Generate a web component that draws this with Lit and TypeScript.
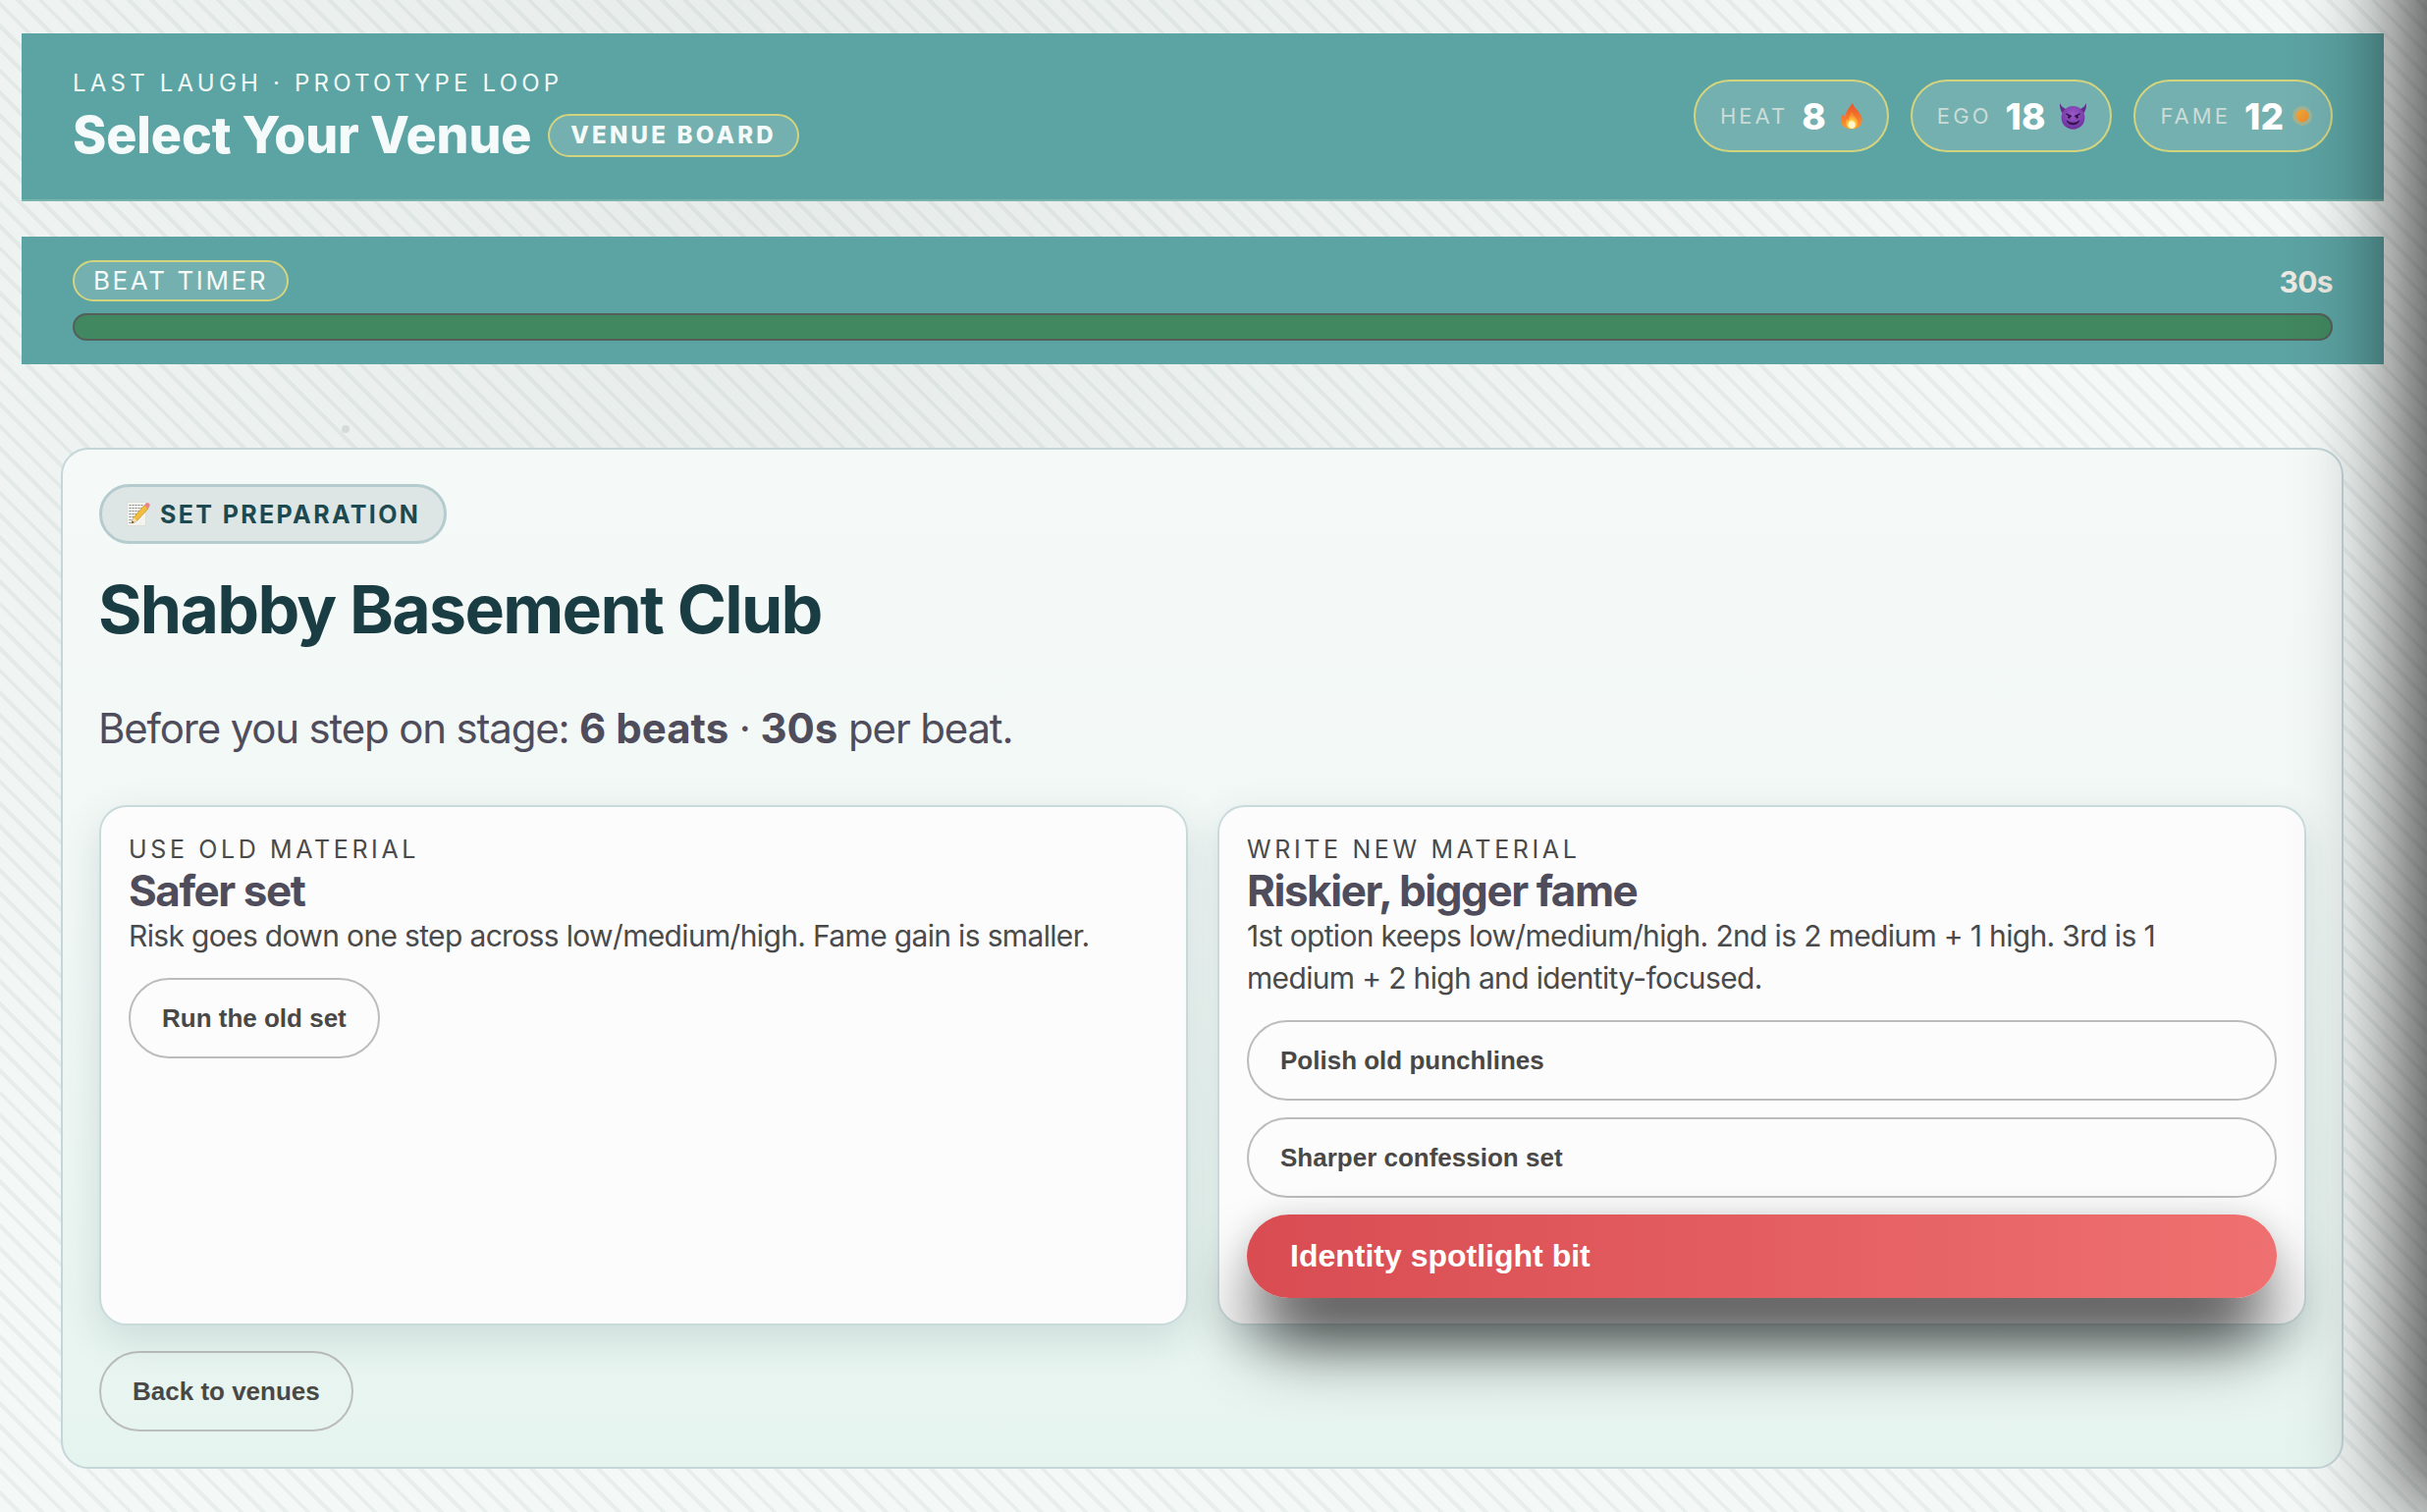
// app.ts
import { LitElement, css, html, svg } from "lit";
import { customElement, property } from "lit/decorators.js";

const fireIcon = svg`
  <svg class="emoji fire" viewBox="0 0 24 28" width="24" height="28">
    <defs>
      <linearGradient id="fire-a" x1="0" y1="0" x2="0" y2="1">
        <stop offset="0" stop-color="#e8512b" />
        <stop offset="0.55" stop-color="#f4772c" />
        <stop offset="1" stop-color="#fb9a30" />
      </linearGradient>
      <radialGradient id="fire-b" cx="0.5" cy="0.8" r="0.6">
        <stop offset="0" stop-color="#fff6b8" />
        <stop offset="0.45" stop-color="#ffd54a" />
        <stop offset="1" stop-color="#f98a2a" />
      </radialGradient>
    </defs>
    <path fill="url(#fire-a)" d="M13 1c1 4 4 6 6.500 9.500 2.500 3.500 3.500 6 3 9.500-.7 4.500-5 7.500-10.500 7.500S1.700 24.500 1 20c-.5-3.300.8-6 2.700-8.300.2 1.600.8 2.800 1.900 3.500C5.300 9.800 9.500 6 13 1z" />
    <path fill="url(#fire-b)" d="M12.500 10c.6 2.500 2.500 4 4.200 6.300 1.300 1.800 2 3.500 1.600 5.400-.6 3-3.300 5.300-6.300 5.300s-5.800-2.200-6.300-5c-.4-2.200.6-4 2-5.400.2 1 .7 1.700 1.300 2.100-.2-3.300 1.300-6 3.500-8.700z" />
    <ellipse cx="12" cy="23" rx="3.500" ry="3.800" fill="#fff7c9" />
  </svg>
`;

const devilIcon = svg`
  <svg class="emoji" viewBox="0 0 30 28" width="29" height="27">
    <defs>
      <radialGradient id="devil-a" cx="0.5" cy="0.35" r="0.7">
        <stop offset="0" stop-color="#9a5ac8" />
        <stop offset="1" stop-color="#6a2f9c" />
      </radialGradient>
    </defs>
    <path fill="#5f2b8e" d="M1 0c1.500 3.500 3.800 5.500 7 6.500L4.500 12C2 8.500.7 4.500 1 0zM29 0c-1.500 3.500-3.800 5.500-7 6.500l3.500 5.500C28 8.500 29.300 4.500 29 0z" />
    <circle cx="15" cy="15.500" r="12.300" fill="url(#devil-a)" />
    <path d="M8 11.500l5 2.300M22 11.500l-5 2.300" stroke="#2f1248" stroke-width="1.300" stroke-linecap="round" />
    <ellipse cx="10.800" cy="14.800" rx="1.300" ry="1.500" fill="#2f1248" />
    <ellipse cx="19.200" cy="14.800" rx="1.300" ry="1.500" fill="#2f1248" />
    <path d="M8.500 18.500c2 3.500 11 3.500 13 0-1.500 5.500-11.500 5.500-13 0z" fill="#2f1248" stroke="#2f1248" stroke-linejoin="round" />
  </svg>
`;

const fameIcon = svg`
  <svg class="emoji fame" viewBox="0 0 20 20" width="20" height="20">
    <defs>
      <linearGradient id="fame-a" x1="0" y1="0" x2="1" y2="1">
        <stop offset="0" stop-color="#f2a93a" />
        <stop offset="1" stop-color="#e98a2a" />
      </linearGradient>
    </defs>
    <circle cx="10" cy="10" r="10" fill="#e5b96a" fill-opacity="0.4" />
    <circle cx="10" cy="10" r="6.500" fill="url(#fame-a)" />
  </svg>
`;

const memoIcon = svg`
  <svg class="emoji" viewBox="0 0 24 25" width="24" height="25">
    <rect x="0.500" y="0.500" width="19" height="24" fill="#f3f3ef" stroke="#d5d5d0" stroke-width="0.600" />
    <path d="M2.500 3.500h14M2.500 6.500h14M2.500 9.500h11M2.500 12.500h8M2.500 15.500h6M2.500 18.500h4M2.500 21.500h6" stroke="#8b8b88" stroke-width="1" stroke-dasharray="2 1" />
    <path d="M5 22l2-6L18 3.500l4 3.500L10.500 19.500z" fill="#f2bd3a" stroke="#b98420" stroke-width="0.600" />
    <path d="M18 3.500l1.800-2c.7-.7 1.800-.7 2.600 0l.8.800c.7.700.7 1.800 0 2.500L22 7z" fill="#e9838a" />
    <path d="M5 22l2-6 3.500 3.500z" fill="#f3dcb5" />
    <path d="M5 22l.8-2.400 1.600 1.500z" fill="#3c3230" />
  </svg>
`;

@customElement("stat-pill")
export class StatPill extends LitElement {
  static styles = css`
    :host {
      display: block;
    }
    .pill {
      display: flex;
      align-items: center;
      height: 74px;
      box-sizing: border-box;
      padding: 0 23px 0 25px;
      border: 2px solid #d4d47f;
      border-radius: 37px;
      background: rgba(255, 255, 255, 0.15);
    }
    .label {
      font-size: 22px;
      letter-spacing: 0.14em;
      color: #cbdcd8;
      margin-right: 14px;
    }
    .value {
      font-size: 37px;
      font-weight: 800;
      color: #fff;
      margin-right: 14px;
    }
    .icon {
      display: flex;
    }
    /* the emoji boxes are wider or narrower than what they draw */
    .fire {
      margin-right: 1px;
    }
    .fame {
      margin: 0 -4px 0 -5px;
    }
  `;

  @property({ type: String })
  label: string = "";

  @property({ type: Number })
  value: number = 0;

  @property({ attribute: false })
  icon: unknown = null;

  render() {
    return html`
      <div class="pill">
        <span class="label">${this.label}</span>
        <span class="value">${this.value}</span>
        <span class="icon">${this.icon}</span>
      </div>
    `;
  }
}

@customElement("app-root")
export class AppRoot extends LitElement {
  static styles = css`
    :host {
      display: block;
      position: relative;
      box-sizing: border-box;
      height: 1540px;
      overflow: hidden;
      padding-top: 34px;
      font-family: Inter, "Liberation Sans", sans-serif;
      background:
        radial-gradient(circle at 32% 12%, rgba(40, 50, 50, 0.065), rgba(40, 50, 50, 0) 62%),
        repeating-linear-gradient(
          45deg,
          rgba(30, 70, 70, 0) 0 12px,
          rgba(30, 70, 70, 0.06) 12px 16px
        ),
        #f4f9f7;
    }

    .bar {
      margin: 0 44px 0 22px;
      background: #5ca3a3;
      box-sizing: border-box;
    }

    .top {
      height: 171px;
      padding: 37px 52px 0;
      display: flex;
      justify-content: space-between;
      border-bottom: 2px solid #77b4aa;
    }
    .eyebrow {
      font-size: 24px;
      line-height: 28px;
      letter-spacing: 0.175em;
      color: #f3fbf8;
    }
    .title-row {
      display: flex;
      align-items: center;
      gap: 17px;
      margin-top: 8px;
    }
    h1 {
      margin: 0;
      font-size: 52px;
      line-height: 62px;
      font-weight: 800;
      letter-spacing: -0.003em;
      color: #f5fbfa;
    }
    .tag {
      border: 2px solid #d4d47f;
      border-radius: 22px;
      background: rgba(255, 255, 255, 0.15);
      color: #f5fbfa;
    }
    .tag-venue {
      height: 44px;
      box-sizing: border-box;
      padding: 0 21px;
      line-height: 40px;
      font-size: 24px;
      font-weight: 800;
      letter-spacing: 0.135em;
    }
    .stats {
      display: flex;
      gap: 22px;
      margin-top: 10px;
    }

    .timer {
      margin-top: 36px;
      height: 130px;
      padding: 24px 52px 0;
    }
    .timer-head {
      display: flex;
      justify-content: space-between;
      align-items: center;
      height: 42px;
    }
    .tag-timer {
      height: 42px;
      box-sizing: border-box;
      padding: 0 19px;
      line-height: 38px;
      font-size: 26px;
      letter-spacing: 0.1em;
    }
    .secs {
      margin-top: 2px;
      font-size: 30px;
      font-weight: 700;
      letter-spacing: -0.02em;
      color: #ece9e2;
    }
    .track {
      margin-top: 12px;
      height: 28px;
      box-sizing: border-box;
      border: 2px solid #545f5a;
      border-radius: 14px;
      background: #41875f;
    }

    .card {
      margin: 85px 85px 0 62px;
      height: 1040px;
      box-sizing: border-box;
      padding: 35px 36px 36px 37px;
      border: 2px solid #c5d6d8;
      border-radius: 28px;
      background: linear-gradient(180deg, #f5faf8 0%, #f2f8f6 40%, #e6f4ef 100%);
    }
    .phase {
      display: inline-flex;
      align-items: center;
      gap: 10px;
      height: 61px;
      box-sizing: border-box;
      padding: 0 24px 0 25px;
      border: 3px solid #b5cccf;
      border-radius: 31px;
      background: #dde6e5;
      font-size: 25px;
      font-weight: 700;
      letter-spacing: 0.095em;
      color: #1d4a50;
    }
    h2 {
      margin: 25px 0 0 -1px;
      font-size: 68px;
      line-height: 82px;
      font-weight: 700;
      letter-spacing: -0.025em;
      color: #1a3c43;
    }
    .lead {
      margin: 51px 0 0 -1px;
      font-size: 42px;
      line-height: 60px;
      letter-spacing: -0.028em;
      color: #4f4d5c;
    }
    .lead b {
      font-weight: 700;
      letter-spacing: 0;
    }

    .options {
      display: grid;
      grid-template-columns: 1fr 1fr;
      gap: 30px;
      margin-top: 48px;
      height: 530px;
    }
    .option {
      box-sizing: border-box;
      padding: 28px 28px 0;
      border: 2px solid #c9dadb;
      border-radius: 28px;
      background: #fbfcfb;
      box-shadow: 0 14px 40px rgba(30, 70, 70, 0.14);
    }
    .kicker {
      font-size: 25px;
      line-height: 30px;
      letter-spacing: 0.145em;
      color: #4a4a4a;
    }
    h3 {
      margin: 3px 0 0;
      font-size: 44px;
      line-height: 48px;
      font-weight: 700;
      letter-spacing: -0.033em;
      color: #4f4d5c;
    }
    .desc {
      margin: 1px 0 0;
      max-width: 1030px;
      font-size: 30px;
      line-height: 43px;
      letter-spacing: -0.022em;
      color: #4a4a4a;
    }
    .choices {
      display: flex;
      flex-direction: column;
      gap: 17px;
      margin-top: 21px;
    }
    button {
      display: block;
      height: 82px;
      box-sizing: border-box;
      padding: 0 32px;
      border: 2px solid #bbbdbb;
      border-radius: 41px;
      background: transparent;
      font-family: "Liberation Sans", Arial, sans-serif;
      font-size: 26px;
      font-weight: 700;
      color: #4a4846;
      text-align: left;
    }
    .wide {
      width: 100%;
    }
    .hot {
      height: 85px;
      border: none;
      border-radius: 43px;
      padding: 0 44px;
      font-size: 32px;
      color: #fff;
      background: linear-gradient(90deg, #d84c52 0%, #ef7070 100%);
      box-shadow:
        0 50px 70px -8px rgba(0, 0, 0, 0.82),
        0 0 30px rgba(0, 0, 0, 0.12);
    }
    .back {
      margin-top: 26px;
    }

    .speck {
      position: absolute;
      left: 348px;
      top: 433px;
      width: 8px;
      height: 8px;
      border-radius: 50%;
      background: #d5dbd9;
    }
    .drawer-shadow {
      position: fixed;
      top: -200px;
      left: 100%;
      width: 300px;
      height: 1740px;
      box-shadow: -24px 0 100px rgba(0, 0, 0, 0.75);
      pointer-events: none;
    }
  `;

  render() {
    return html`
      <header class="bar top">
        <div>
          <div class="eyebrow">LAST LAUGH · PROTOTYPE LOOP</div>
          <div class="title-row">
            <h1>Select Your Venue</h1>
            <span class="tag tag-venue">VENUE BOARD</span>
          </div>
        </div>
        <div class="stats">
          <stat-pill label="HEAT" .value=${8} .icon=${fireIcon}></stat-pill>
          <stat-pill label="EGO" .value=${18} .icon=${devilIcon}></stat-pill>
          <stat-pill label="FAME" .value=${12} .icon=${fameIcon}></stat-pill>
        </div>
      </header>

      <section class="bar timer">
        <div class="timer-head">
          <span class="tag tag-timer">BEAT TIMER</span>
          <span class="secs">30s</span>
        </div>
        <div class="track"></div>
      </section>

      <main class="card">
        <div class="phase">${memoIcon}<span>SET PREPARATION</span></div>
        <h2>Shabby Basement Club</h2>
        <p class="lead">Before you step on stage: <b>6 beats</b> · <b>30s</b> per beat.</p>

        <div class="options">
          <article class="option">
            <div class="kicker">USE OLD MATERIAL</div>
            <h3>Safer set</h3>
            <p class="desc">Risk goes down one step across low/medium/high. Fame gain is smaller.</p>
            <div class="choices">
              <div><button>Run the old set</button></div>
            </div>
          </article>
          <article class="option">
            <div class="kicker">WRITE NEW MATERIAL</div>
            <h3>Riskier, bigger fame</h3>
            <p class="desc">
              1st option keeps low/medium/high. 2nd is 2 medium + 1 high. 3rd is 1 medium + 2 high and
              identity-focused.
            </p>
            <div class="choices">
              <button class="wide">Polish old punchlines</button>
              <button class="wide">Sharper confession set</button>
              <button class="wide hot">Identity spotlight bit</button>
            </div>
          </article>
        </div>

        <button class="back">Back to venues</button>
      </main>

      <div class="speck"></div>
      <div class="drawer-shadow"></div>
    `;
  }
}
